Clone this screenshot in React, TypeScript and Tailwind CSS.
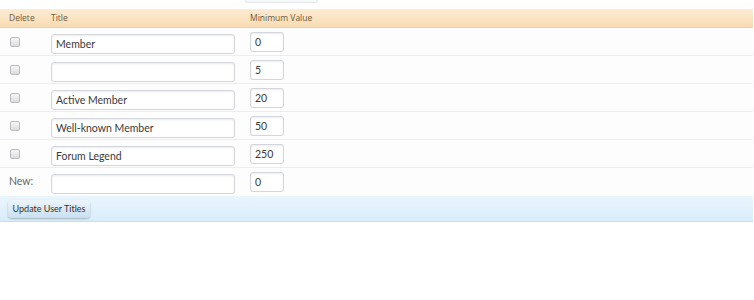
const rows = [
  { title: "Member", value: "0" },
  { title: "", value: "5" },
  { title: "Active Member", value: "20" },
  { title: "Well-known Member", value: "50" },
  { title: "Forum Legend", value: "250" },
];

const font = { fontFamily: '"Open Sans", "DejaVu Sans", sans-serif' };
const narrow = { fontFamily: 'Lato, "Open Sans", sans-serif' };

function TextBox({ value, w }: { value: string; w: string }) {
  return (
    <input
      type="text"
      defaultValue={value}
      className={`${w} h-[20px] rounded-[3px] border border-[#d3d6da] bg-white px-[4px] text-[10.5px] text-[#3a3a3a] shadow-[inset_0_1px_2px_rgba(0,0,0,0.08)] outline-none`}
      style={narrow}
    />
  );
}

export default function App() {
  return (
    <div className="w-[754px] h-[300px] bg-white" style={font}>
      <div className="flex h-[9px]">
        <div className="ml-[245px] h-[3px] w-[73px] rounded-b-[3px] border border-t-0 border-[#e4e6e8] bg-[#f7f8f9]" />
      </div>
      <div className="mr-[1px] flex h-[19px] items-center border-b border-[#f1cf9c] bg-gradient-to-b from-[#fcebd2] to-[#f8dcb2] text-[8.5px] text-[#6b5a40]">
        <div className="w-[51px] pl-[9px]">Delete</div>
        <div className="w-[199px]">Title</div>
        <div>Minimum Value</div>
      </div>
      {rows.map((r, i) => (
        <div
          key={i}
          className="mr-[1px] flex h-[28px] items-center border-b border-[#ebeef1] bg-[#fdfdfe]"
        >
          <div className="flex w-[51px] pl-[10px]">
            <div className="h-[10px] w-[10px] rounded-[2px] border border-[#b9bcc0] bg-gradient-to-b from-[#f6f6f6] to-[#dcdcdc]" />
          </div>
          <div className="w-[199px]">
            <TextBox value={r.title} w="w-[184px]" />
          </div>
          <TextBox value={r.value} w="w-[34px]" />
        </div>
      ))}
      <div className="mr-[1px] flex h-[28px] items-center bg-[#fdfdfe]">
        <div className="w-[51px] pl-[9px] text-[10.5px] text-[#666]" style={narrow}>
          New:
        </div>
        <div className="w-[199px]">
          <TextBox value="" w="w-[184px]" />
        </div>
        <TextBox value="0" w="w-[34px]" />
      </div>
      <div className="mr-[1px] flex h-[26px] items-center border-b border-[#c9dcea] bg-gradient-to-b from-[#e9f5fd] to-[#d9edfb] pl-[8px]">
        <button
          className="h-[18px] w-[82px] rounded-[4px] bg-gradient-to-b from-[#edf5fb] to-[#c9dff0] text-[9px] text-[#333] shadow-[0_1px_2px_rgba(0,0,0,0.25)]"
          style={narrow}
        >
          Update User Titles
        </button>
      </div>
    </div>
  );
}
